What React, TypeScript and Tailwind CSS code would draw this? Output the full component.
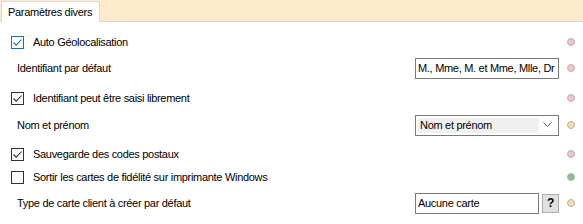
import React from 'react';

type Dot = 'pink' | 'peach' | 'green';

const dotColors: Record<Dot, string> = {
    pink: 'bg-[#f7c3cd]',
    peach: 'bg-[#fbd9a6]',
    green: 'bg-[#8fbc8f]',
};

const StatusDot = ({ color }: { color: Dot }) => (
    <span className={`block w-[8px] h-[8px] rounded-full border border-[#b4b4b4] ${dotColors[color]}`} />
);

const Check = ({ checked, focused }: { checked: boolean; focused?: boolean }) => (
    <span
        className={`flex items-center justify-center w-[13px] h-[13px] border bg-white ${focused ? 'border-[#0078d7]' : 'border-[#333333]'}`}
    >
        {checked && (
            <svg width="11" height="11" viewBox="0 0 11 11">
                <path d="M1.5 5.5 L4.2 8.2 L9.5 2.5" fill="none" stroke={focused ? '#0078d7' : '#333333'} strokeWidth="1.1" />
            </svg>
        )}
    </span>
);

const Row = ({ mt, dot, children }: { mt: string; dot: Dot; children: React.ReactNode }) => (
    <div className={`flex items-center h-[22px] ${mt}`}>
        <div className="flex-1 flex items-center h-full">{children}</div>
        <div className="w-[24px] flex justify-center">
            <StatusDot color={dot} />
        </div>
    </div>
);

const CheckLabel = ({ label, checked, focused }: { label: string; checked: boolean; focused?: boolean }) => (
    <div className="flex items-center pl-[11px] gap-[9px]">
        <Check checked={checked} focused={focused} />
        <span>{label}</span>
    </div>
);

const App = () => {
    return (
        <div
            className="w-[583px] h-[224px] bg-white text-black text-[11px] tracking-[-0.3px] overflow-hidden"
            style={{ fontFamily: '"Liberation Sans", Arial, sans-serif' }}
        >
            {/* bandeau des onglets */}
            <div className="h-[22px] bg-[#fde9cc] border-b border-[#d9d9d9] flex items-end pl-[1px]">
                <div className="h-[21px] -mb-[1px] bg-white border border-b-0 border-[#d9d9d9] pl-[6px] pr-[7px] flex items-center whitespace-nowrap">
                    Paramètres divers
                </div>
            </div>

            <div>
                <Row mt="mt-[9px]" dot="pink">
                    <CheckLabel label="Auto Géolocalisation" checked focused />
                </Row>

                <Row mt="mt-[4px]" dot="pink">
                    <span className="pl-[17px] flex-1">Identifiant par défaut</span>
                    <div className="w-[144px] h-[21px] border border-[#7a7a7a] flex items-center px-[2px] whitespace-nowrap overflow-hidden">
                        M., Mme, M. et Mme, Mlle, Dr
                    </div>
                </Row>

                <Row mt="mt-[8px]" dot="pink">
                    <CheckLabel label="Identifiant peut être saisi librement" checked />
                </Row>

                <Row mt="mt-[5px]" dot="peach">
                    <span className="pl-[17px] flex-1">Nom et prénom</span>
                    <div className="w-[144px] h-[21px] border border-[#7a7a7a] bg-white flex items-center p-[2px]">
                        <div className="flex-1 h-full bg-[#f0f0f0] flex items-center pl-[2px]">Nom et prénom</div>
                        <div className="w-[17px] flex justify-center">
                            <svg width="9" height="6" viewBox="0 0 9 6">
                                <path d="M0.5 0.5 L4.5 4.5 L8.5 0.5" fill="none" stroke="#555555" strokeWidth="1" />
                            </svg>
                        </div>
                    </div>
                </Row>

                <Row mt="mt-[7px]" dot="pink">
                    <CheckLabel label="Sauvegarde des codes postaux" checked />
                </Row>

                <Row mt="mt-[1px]" dot="green">
                    <CheckLabel label="Sortir les cartes de fidélité sur imprimante Windows" checked={false} />
                </Row>

                <Row mt="mt-[4px]" dot="peach">
                    <span className="pl-[17px] flex-1">Type de carte client à créer par défaut</span>
                    <div className="flex items-center gap-[3px]">
                        <div className="w-[124px] h-[21px] border border-[#7a7a7a] flex items-center px-[2px]">
                            Aucune carte
                        </div>
                        <button className="w-[17px] h-[19px] bg-[#e1e1e1] border border-[#adadad] font-bold text-[12px] flex items-center justify-center">
                            ?
                        </button>
                    </div>
                </Row>
            </div>
        </div>
    );
};

export default App;
